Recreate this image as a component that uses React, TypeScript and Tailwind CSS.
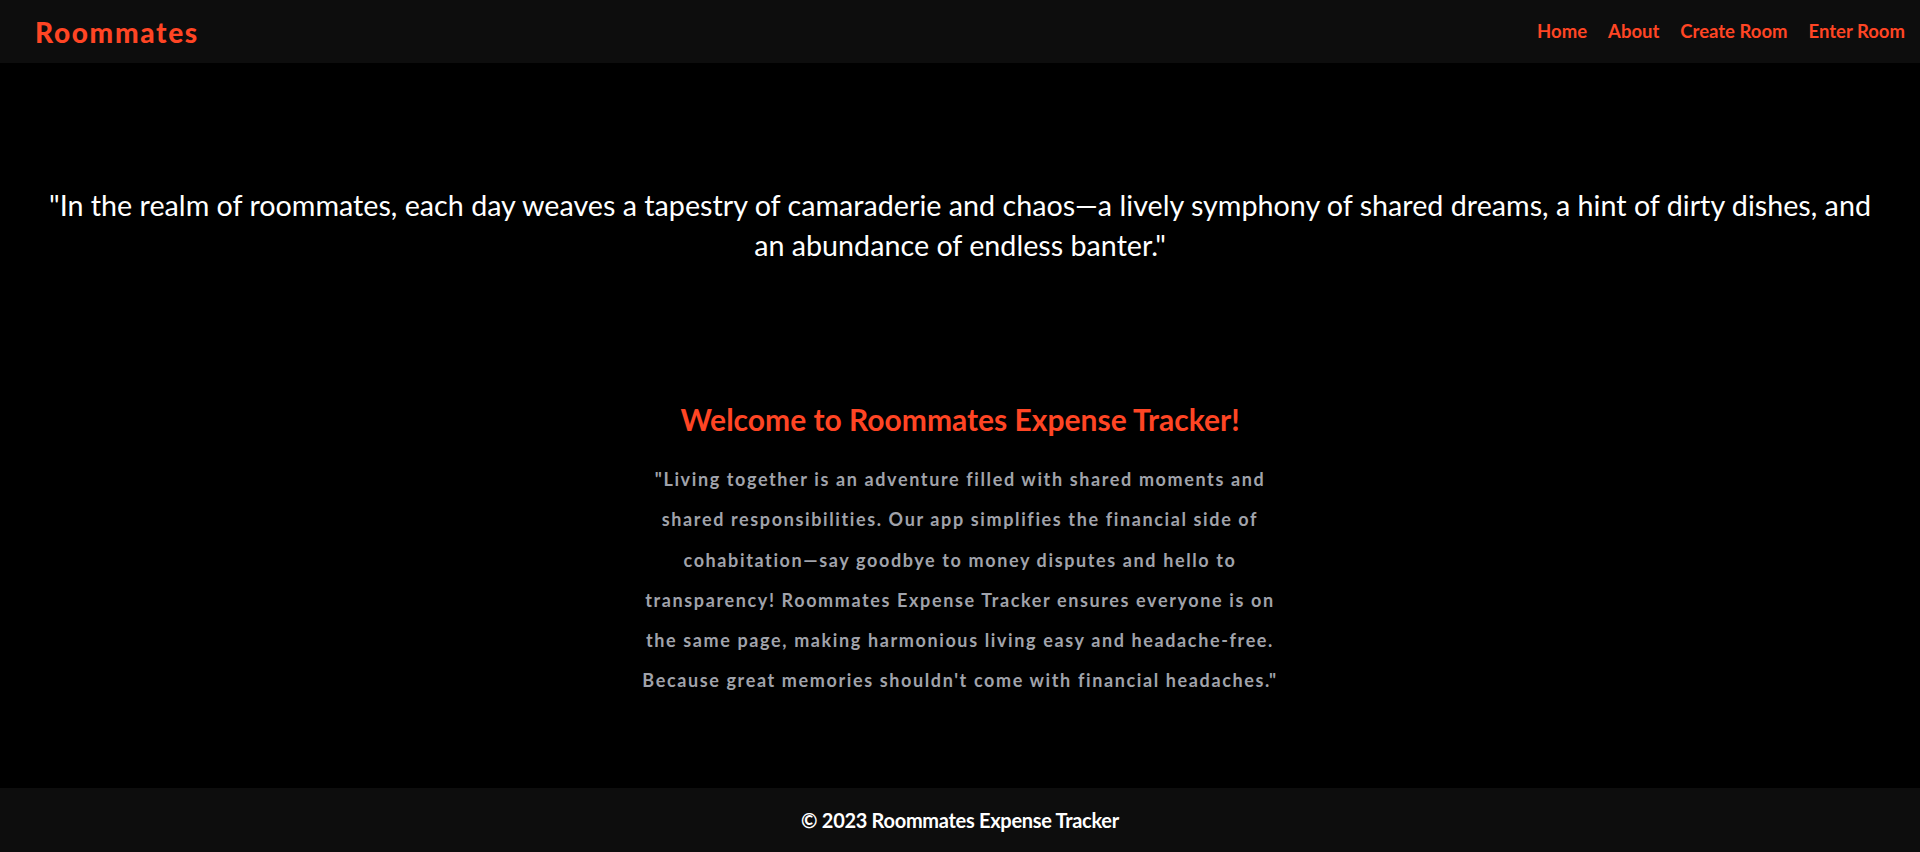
const navLinks = ["Home", "About", "Create Room", "Enter Room"];

const Header = () => {
  return (
    <header className="h-[63px] bg-[#0d0d0d] flex items-center justify-between pl-[35px] pr-[15px]">
      <a className="text-[28px] font-black tracking-[0.06em] text-[#ff4524]">Roommates</a>
      <nav className="flex items-center gap-[21px]">
        {navLinks.map((link) => (
          <a key={link} className="text-[18.5px] font-bold text-[#ff4524]">
            {link}
          </a>
        ))}
      </nav>
    </header>
  );
};

const Footer = () => {
  return (
    <footer className="h-[64px] bg-[#0d0d0d] flex items-center justify-center">
      <p className="text-[20px] font-bold text-white tracking-[-0.015em]">© 2023 Roommates Expense Tracker</p>
    </footer>
  );
};

export default function App() {
  return (
    <div className="min-h-[852px] bg-black flex flex-col font-['Lato',sans-serif]">
      <Header />
      <main className="flex-1 flex flex-col">
        <section className="pt-[122px] px-[40px]">
          <p className="text-[28.7px] leading-[40px] text-white text-center">
            "In the realm of roommates, each day weaves a tapestry of camaraderie and chaos—a lively symphony of shared
            dreams, a hint of dirty dishes, and an abundance of endless banter."
          </p>
        </section>
        <section className="pt-[134px] flex justify-center">
          <div className="w-[642px] text-center">
            <h2 className="text-[30px] font-bold text-[#ff4524] leading-[40px]">Welcome to Roommates Expense Tracker!</h2>
            <p className="mt-[20px] text-[18px] font-bold leading-[40.3px] tracking-[0.09em] text-[#a0a3ab]">
              "Living together is an adventure filled with shared moments and shared responsibilities. Our app simplifies
              the financial side of cohabitation—say goodbye to money disputes and hello to transparency! Roommates
              Expense Tracker ensures everyone is on the same page, making harmonious living easy and headache-free.
              Because great memories shouldn't come with financial headaches."
            </p>
          </div>
        </section>
      </main>
      <Footer />
    </div>
  );
}
